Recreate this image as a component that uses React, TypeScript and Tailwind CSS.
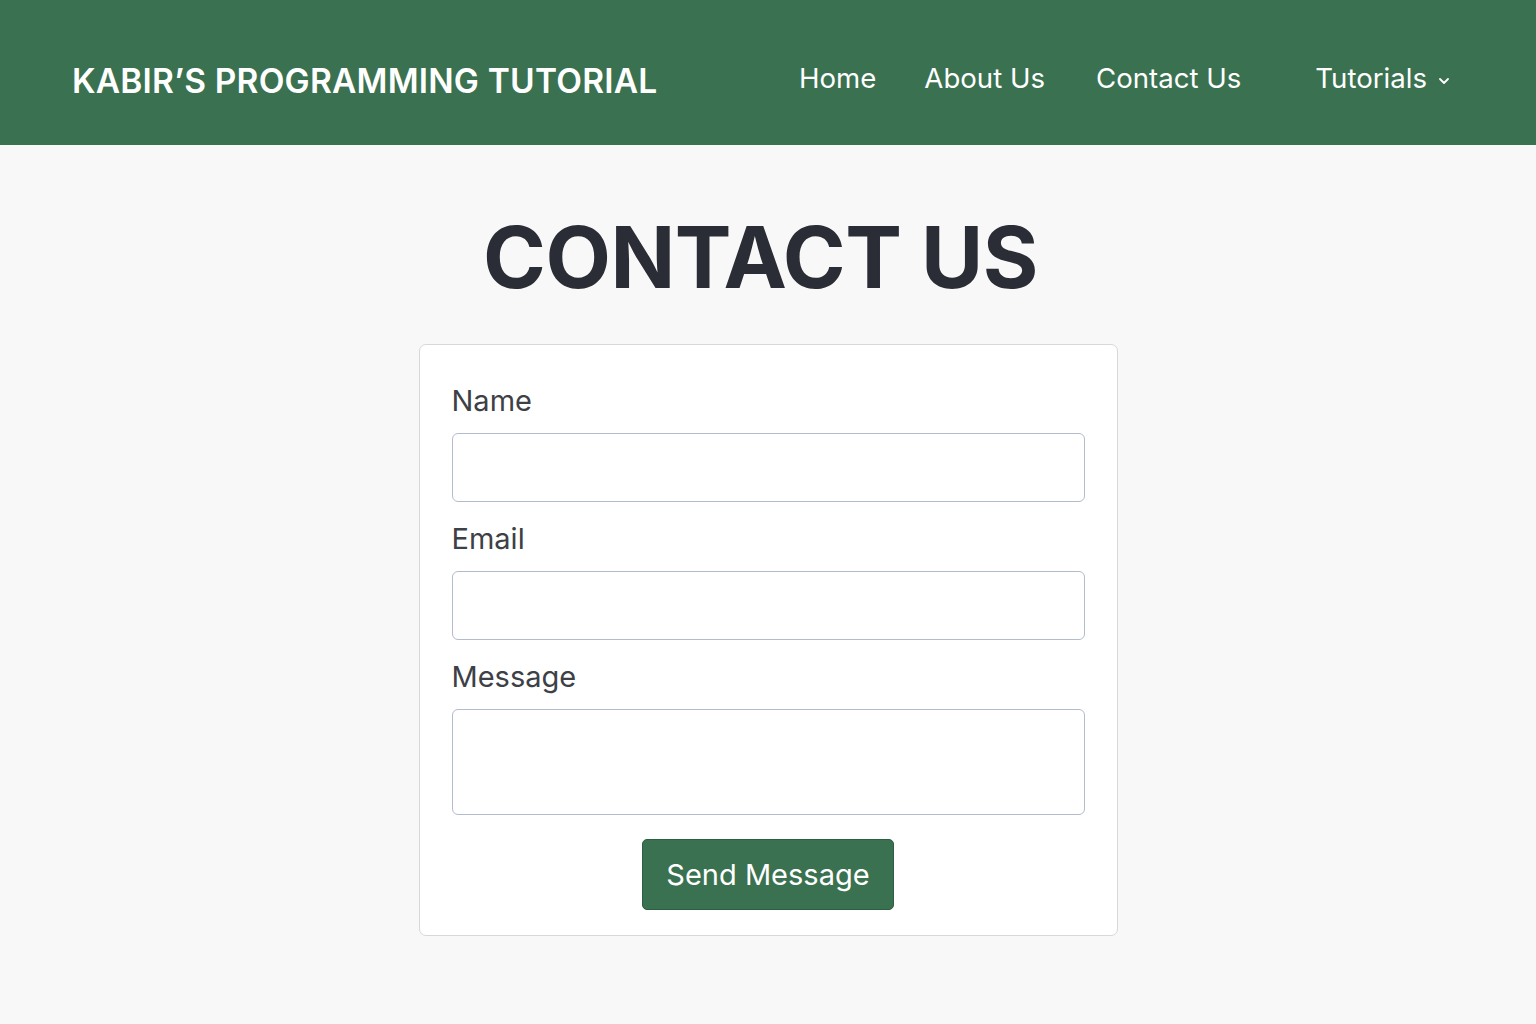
import { ChevronDown } from "lucide-react";

const navLinks = ["Home", "About Us", "Contact Us"];

const fields = [
  { label: "Name", type: "input" },
  { label: "Email", type: "input" },
  { label: "Message", type: "textarea" },
];

const App = () => {
  return (
    <div className="min-h-screen bg-[#f8f8f8] font-['Inter',sans-serif]">
      {/* Top bar */}
      <header className="h-[145px] bg-[#3a7150] flex items-center justify-between pl-[72px] pr-[84px]">
        <h1 className="text-white text-[33.5px] font-semibold tracking-[0.2px] mt-[17px]">
          KABIR’S PROGRAMMING TUTORIAL
        </h1>
        <nav className="flex items-center text-white text-[27.6px] mt-[13px]">
          {navLinks.map((link, i) => (
            <a
              key={link}
              href="#"
              className={i === 0 ? "" : i === 1 ? "ml-[48px]" : "ml-[51px]"}
            >
              {link}
            </a>
          ))}
          <button className="ml-[74px] flex items-center gap-[9px]">
            Tutorials
            <ChevronDown className="w-[16px] h-[16px] mt-[4px]" strokeWidth={2.75} />
          </button>
        </nav>
      </header>

      <main className="flex flex-col items-center">
        <h2 className="mt-[70px] mr-[15px] text-[85px] leading-none font-bold text-[#2a2d35] tracking-[-0.5px]">
          CONTACT US
        </h2>

        <form className="mt-[44px] w-[699px] bg-white border border-[#d6d8dc] rounded-[7px] px-[32px] pt-[38px] pb-[25px] flex flex-col">
          {fields.map((field, i) => (
            <div key={field.label} className={i === 0 ? "" : "mt-[19px]"}>
              <label className="block text-[29px] leading-[36px] text-[#3d4046]">
                {field.label}
              </label>
              {field.type === "input" ? (
                <input
                  className="mt-[14px] w-full h-[69px] rounded-[6px] border border-[#b3bccb] bg-white"
                />
              ) : (
                <textarea
                  className="mt-[14px] block w-full h-[106px] rounded-[6px] border border-[#b3bccb] bg-white resize-none"
                />
              )}
            </div>
          ))}
          <button
            type="button"
            className="mt-[24px] self-center w-[252px] h-[71px] rounded-[5px] bg-[#3a7150] border border-[#2e5e41] text-white text-[29px]"
          >
            Send Message
          </button>
        </form>
      </main>
    </div>
  );
};

export default App;
